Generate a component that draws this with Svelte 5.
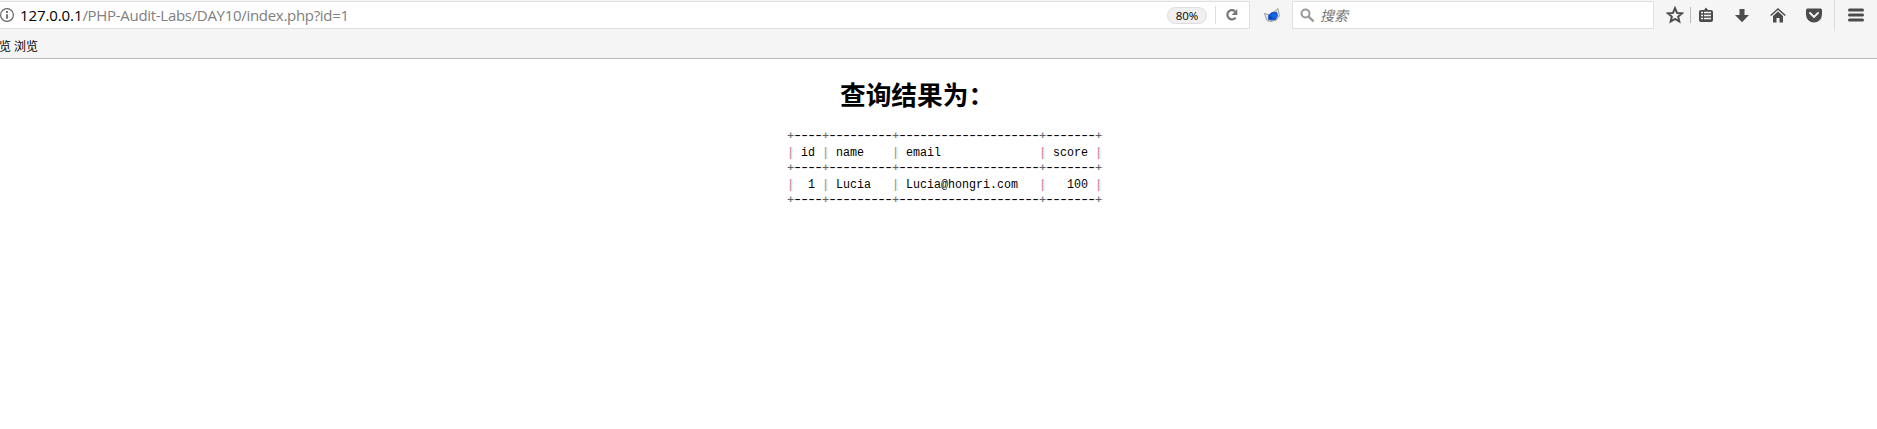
<script>
  const rows = [
    '+----+---------+--------------------+-------+',
    '| id | name    | email              | score |',
    '+----+---------+--------------------+-------+',
    '|  1 | Lucia   | Lucia@hongri.com   |   100 |',
    '+----+---------+--------------------+-------+'
  ];
  const kinds = { '-': 'dash', '+': 'plus', '|': 'bar' };
  // Split a row into separators and text runs.
  const parts = (row) =>
    [...row.matchAll(/\+|\||-+|[^+|-]+/g)].map((m) => ({
      text: m[0],
      kind: kinds[m[0][0]] ?? 'cell'
    }));
</script>

<div class="window">
  <header>
    <div class="nav">
      <div class="address">
        <svg class="info" width="15" height="16" viewBox="0 0 15 16"><circle cx="7" cy="8" r="6.4" fill="none" stroke="#666" stroke-width="1.2"/><path d="M7 4v2M7 7.2v4.6" stroke="#666" stroke-width="1.8"/></svg>
        <div class="url"><b>127.0.0.1</b>/PHP-Audit-Labs/DAY10/index.php?id=1</div>
        <div class="zoom">80%</div>
        <i class="sep"></i>
        <svg class="reload" width="14" height="14" viewBox="0 0 14 14"><path d="M10.6 9.6A4.6 4.6 0 1 1 10 3.3" fill="none" stroke="#777" stroke-width="2.2"/><path d="M12.3 1v6H6.6z" fill="#777"/></svg>
      </div>
      <svg class="fox" width="16" height="15" viewBox="0 0 16 15"><path d="M.5 5.5 5 6.8 11 3l3-2.5L15.4 8l-3 4-5.4 1.5-4-1z" fill="#e4e6e9" stroke="#888" stroke-width=".8"/><path d="m4.2 7.2 3.5-3 5-.4 1.300 4-2.200 4-4.800.8L4 11.500z" fill="#1555cf"/><path d="m7 7 4-2 2 3-3 2z" fill="#0b6af0"/><path d="m5 9 3 1.5" stroke="#113777"/></svg>
      <div class="search">
        <svg width="15" height="15" viewBox="0 0 15 15"><circle cx="5.5" cy="5.5" r="4" fill="none" stroke="#999" stroke-width="2"/><path d="m8.6 8.6 5 4.7" stroke="#999" stroke-width="2.4"/></svg>
        <span>搜索</span>
      </div>
      <div class="tools">
        <svg width="18" height="18" viewBox="0 0 18 18"><path d="m9 2.2 2 4.7 4.9.5-3.7 3.2 1.1 4.9L9 13l-4.3 2.5 1.1-4.9-3.7-3.2L7 6.900z" fill="none" stroke="#4c4c4c" stroke-width="2"/></svg>
        <i class="split"></i>
        <svg width="14" height="16" viewBox="0 0 14 16"><path d="M2 3h3l2-2.5L9 3h3a2 2 0 0 1 2 2v8a2 2 0 0 1-2 2H2a2 2 0 0 1-2-2V5a2 2 0 0 1 2-2z" fill="#4c4c4c"/><path d="M2 5.5h2M5 5.5h7M2 8.5h2M5 8.5h7M2 11.5h2M5 11.5h7" stroke="#f5f5f5" stroke-width="1.4"/></svg>
        <svg class="down" width="14" height="15" viewBox="0 0 14 15"><path d="M4.5 1h5v6H14l-7 7.2L0 7h4.5z" fill="#4c4c4c"/></svg>
        <svg class="home" width="16" height="15" viewBox="0 0 16 15"><path d="M.7 7.5 8 1l7.3 6.5" fill="none" stroke="#4c4c4c" stroke-width="1.5"/><path d="m3 8 5-4.5L13 8v6.5H9.5V10h-3v4.5H3z" fill="#4c4c4c"/></svg>
        <svg class="pocket" width="16" height="15" viewBox="0 0 16 15"><path d="M1.5.5h13A1.5 1.5 0 0 1 16 2v4.5a8 8 0 0 1-16 0V2A1.5 1.5 0 0 1 1.5.5z" fill="#4c4c4c"/><path d="m4 5 4 3.9L12 5" fill="none" stroke="#f5f5f5" stroke-width="2" stroke-linecap="round"/></svg>
        <i class="edge"></i>
        <svg class="menu" width="16" height="14" viewBox="0 0 16 14"><path d="M1.5 2h13M1.5 7h13M1.5 12h13" stroke="#4c4c4c" stroke-width="3" stroke-linecap="round"/></svg>
      </div>
    </div>
    <div class="bookmarks">览 浏览</div>
  </header>
  <main>
    <h1>查询结果为：</h1>
    <div class="result">
      {#each rows as row}
        <div class="line">{#each parts(row) as p}<span class={p.kind} style:width="{p.text.length * 7}px">{p.text}</span>{/each}</div>
      {/each}
    </div>
  </main>
</div>

<style>
  .window { width: 1877px; height: 429px; background: #fff; overflow: hidden; }
  svg { display: block; flex: none; }
  header { height: 59px; box-sizing: border-box; background: #f5f5f5; border-bottom: 1px solid #bababa; font-family: "Noto Sans", "Noto Sans CJK SC", sans-serif; }
  .nav { display: flex; height: 32px; }
  .address, .search { height: 28px; box-sizing: border-box; margin-top: 1px; background: #fff; border: 1px solid #e0e0e0; display: flex; align-items: center; }
  .address { width: 1250px; border-left: 0; }
  .url { flex: 1; margin-left: 5px; color: #808080; font: 15px/26px "Open Sans", sans-serif; letter-spacing: -0.3px; white-space: pre; }
  .url b { color: #000; font-weight: 400; letter-spacing: -0.1px; }
  .zoom { width: 40px; height: 17px; box-sizing: border-box; border: 1px solid #ddd; border-radius: 9px; background: #f0f0f0; color: #000; font: 11.5px/15px "Open Sans", sans-serif; text-align: center; }
  .sep { width: 1px; height: 18px; background: #ddd; margin: 0 9px 0 8px; }
  .reload { margin-right: 10px; }
  .fox { margin: 8px 12px 0 14px; }
  .search { width: 362px; }
  .search svg { margin: 0 5px 0 7px; }
  .search span { color: #777; font-size: 14px; font-style: italic; }
  .tools { display: flex; align-items: center; height: 30px; margin-left: 12px; }
  .split { width: 1px; height: 16px; background: #bbb; margin: 0 8px 0 6px; }
  .down { margin-left: 22px; }
  .home { margin-left: 21px; }
  .pocket { margin-left: 20px; }
  .edge { width: 1px; height: 32px; background: #ddd; margin: 0 13px 0 12px; }
  .bookmarks { font-size: 12px; line-height: 30px; margin-left: -1px; color: #000; white-space: pre; }
  h1 { margin: 18px 0 0 840px; height: 34px; font: 700 25.7px/34px "Noto Sans CJK SC", sans-serif; white-space: nowrap; }
  .result { margin: 17px 0 0 787px; font: 11.667px/16px "Liberation Mono", monospace; color: #000; }
  .line { display: flex; height: 16px; }
  .line span { flex: none; height: 16px; white-space: pre; display: block; }
  .cell { transform: translateY(1px) scaleY(1.12); }
  .bar { color: #d97878; text-shadow: 1px 0 #a8eef0; transform: translateY(1px) scaleY(1.15); }
  .dash { font-size: 17px; letter-spacing: -3.202px; text-indent: -1.6px; transform: scaleY(0.8); }
  .plus { color: #6b5a5c; text-shadow: 1px 0 #a8dce8; }
</style>
